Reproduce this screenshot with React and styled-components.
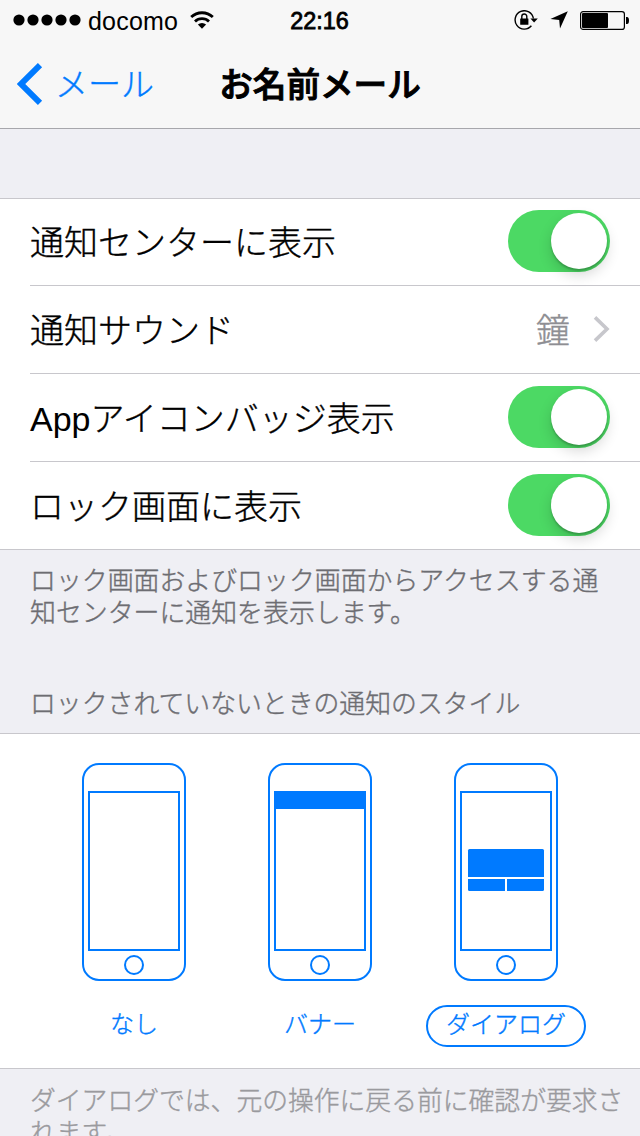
import React from "react";
import styled, { createGlobalStyle, css } from "styled-components";

const BLUE = "#007aff";
const LINE = "#c8c7cc";

const GlobalStyle = createGlobalStyle`
  * { box-sizing: border-box; }
  body { margin: 0; background: #efeff4; }
`;

const bookWeight = css`
  font-weight: 300;
  -webkit-text-stroke: 0.4px currentColor;
`;

const Screen = styled.div`
  width: 640px;
  height: 1136px;
  overflow: hidden;
  background: #efeff4;
  color: #000;
  font-family: "Liberation Sans", "Noto Sans CJK JP", sans-serif;
  font-weight: 300;
`;

const Header = styled.header`
  height: 129px;
  background: #f7f7f7;
  border-bottom: 1px solid #a7a7ac;
`;

const StatusBar = styled.div`
  display: grid;
  grid-template-columns: 1fr auto 1fr;
  align-items: center;
  height: 40px;
  padding: 0 11px 0 13px;
`;

const StatusGroup = styled.div`
  display: flex;
  align-items: center;
  justify-content: ${(p) => (p.$end ? "flex-end" : "flex-start")};
  gap: ${(p) => (p.$end ? "12px" : "0")};
  svg { display: block; flex: none; }
`;

const Carrier = styled.span`
  margin: 2px 12px 0 7px;
  font-size: 25px;
  line-height: 30px;
  letter-spacing: 0.2px;
`;

const Clock = styled.span`
  font-size: 23.4px;
  line-height: 30px;
  padding: 2px 3px 0 0;
  -webkit-text-stroke: 0.8px #000;
`;

const NavBar = styled.nav`
  display: grid;
  grid-template-columns: 1fr auto 1fr;
  align-items: center;
  height: 88px;
  padding: 0 17px;
`;

const BackButton = styled.a`
  display: flex;
  align-items: center;
  gap: 12px;
  color: ${BLUE};
  font-size: 33px;
  line-height: 44px;
  ${bookWeight}
`;

const BackLabel = styled.span`
  padding-top: 1px;
`;

const Title = styled.h1`
  margin: 0;
  padding-top: 3px;
  font-size: 33.6px;
  line-height: 44px;
  font-weight: 500;
  -webkit-text-stroke: 1px #000;
`;

const Group = styled.section`
  background: #fff;
  box-shadow: inset 0 1px ${LINE}, inset 0 -1px ${LINE};
`;

const SettingsGroup = styled(Group)`
  margin-top: 69px;
`;

const Row = styled.div`
  display: flex;
  align-items: center;
  justify-content: space-between;
  height: 88px;
  margin-left: 30px;
  padding: 0 30px 2px 0;
  box-shadow: inset 0 -1px ${LINE};
  font-size: 34px;
`;

const RowLabel = styled.span`
  padding-top: 3px;
  line-height: 50px;
  ${bookWeight}
`;

const Latin = styled.span`
  -webkit-text-stroke: 0;
`;

const RowValue = styled.span`
  display: flex;
  align-items: center;
  gap: 23px;
  color: #8e8e93;
  line-height: 50px;
  ${bookWeight}
`;

const ValueText = styled.span`
  padding-top: 3px;
`;

const SwitchTrack = styled.span`
  display: flex;
  justify-content: flex-end;
  width: 102px;
  height: 62px;
  padding: 3px;
  border-radius: 31px;
  background: #4cd964;
`;

const SwitchKnob = styled.span`
  width: 56px;
  height: 56px;
  border-radius: 50%;
  background: #fff;
  box-shadow: 0 6px 14px rgba(0, 0, 0, 0.16), 0 2px 2px rgba(0, 0, 0, 0.2);
`;

const Note = styled.p`
  margin: 0;
  padding: ${(p) => p.$pad};
  color: ${(p) => (p.$faded ? "#9a9a9e" : "#6d6d72")};
  font-size: ${(p) => p.$size || 25.9}px;
  line-height: 32px;
  ${bookWeight}
`;

const StyleGroup = styled(Group)`
  display: flex;
  justify-content: center;
  height: 336px;
  padding-top: 30px;
`;

const StyleOption = styled.div`
  display: flex;
  flex-direction: column;
  align-items: center;
  width: 186px;
  svg { display: block; }
`;

const OptionLabel = styled.span`
  width: 160px;
  height: 42px;
  margin-top: 24px;
  padding-top: 1px;
  border: 2px solid ${(p) => (p.$selected ? BLUE : "transparent")};
  border-radius: 21px;
  color: ${BLUE};
  font-size: 24px;
  line-height: 34px;
  text-align: center;
  ${bookWeight}
`;

function Switch() {
  return (
    <SwitchTrack>
      <SwitchKnob />
    </SwitchTrack>
  );
}

function SignalDots() {
  return (
    <svg width="68" height="12" viewBox="0 0 68 12">
      {[6, 20, 34, 48, 62].map((x) => (
        <circle key={x} cx={x} cy="6" r="5.6" />
      ))}
    </svg>
  );
}

function Wifi() {
  return (
    <svg width="24" height="18" viewBox="0 0 24 18">
      <g fill="none" stroke="#000" strokeWidth="2.8">
        <path d="M1.2 6.1A15.6 15.6 0 0 1 22.8 6.1" />
        <path d="M5 10.4A10 10 0 0 1 19 10.4" />
      </g>
      <path d="M12 17.8L7.9 13.5A6 6 0 0 1 16.1 13.5Z" />
    </svg>
  );
}

function RotationLock() {
  return (
    <svg width="24" height="20" viewBox="0 0 24 20">
      <path d="M17.4 15.8A9.2 9.2 0 1 1 19.4 8.5" fill="none" stroke="#000" strokeWidth="1.4" />
      <path d="M16.4 8.6H23.8L20.1 12.6Z" />
      <rect x="6.2" y="8.4" width="8.2" height="6.4" rx="0.4" />
      <path d="M7.8 9V6.6a2.5 2.6 0 0 1 5 0V9" fill="none" stroke="#000" strokeWidth="1.4" />
    </svg>
  );
}

function LocationArrow() {
  return (
    <svg width="18" height="18" viewBox="0 0 18 18">
      <path d="M17.8 0.2L10 17.6L9.2 8.9L0.4 8Z" />
    </svg>
  );
}

function Battery() {
  return (
    <svg width="49" height="19" viewBox="0 0 49 19">
      <rect x="0.6" y="0.6" width="43.8" height="17.8" rx="2.5" fill="none" stroke="#000" strokeWidth="1.2" />
      <rect x="2" y="2" width="26" height="15" rx="1" />
      <path d="M46 6h1a2 3.5 0 0 1 0 7h-1z" />
    </svg>
  );
}

function Phone({ children }) {
  return (
    <svg width="104" height="218" viewBox="0 0 104 218" fill={BLUE}>
      <g fill="none" stroke={BLUE} strokeWidth="2">
        <rect x="1" y="1" width="102" height="216" rx="16" />
        <rect x="7" y="29" width="90" height="158" />
        <circle cx="52" cy="202" r="9" />
      </g>
      {children}
    </svg>
  );
}

export default function App() {
  return (
    <Screen>
      <GlobalStyle />
      <Header>
        <StatusBar>
          <StatusGroup>
            <SignalDots />
            <Carrier>docomo</Carrier>
            <Wifi />
          </StatusGroup>
          <Clock>22:16</Clock>
          <StatusGroup $end>
            <RotationLock />
            <LocationArrow />
            <Battery />
          </StatusGroup>
        </StatusBar>
        <NavBar>
          <BackButton>
            <svg width="26" height="42" viewBox="0 0 26 42">
              <path d="M23 2.2L3.9 21L23 39.8" fill="none" stroke={BLUE} strokeWidth="6" />
            </svg>
            <BackLabel>メール</BackLabel>
          </BackButton>
          <Title>お名前メール</Title>
        </NavBar>
      </Header>

      <SettingsGroup>
        <Row>
          <RowLabel>通知センターに表示</RowLabel>
          <Switch />
        </Row>
        <Row>
          <RowLabel>通知サウンド</RowLabel>
          <RowValue>
            <ValueText>鐘</ValueText>
            <svg width="17" height="26" viewBox="0 0 17 26">
              <path d="M2 1.4L14 13L2 24.6" fill="none" stroke="#c7c7cc" strokeWidth="3.6" />
            </svg>
          </RowValue>
        </Row>
        <Row>
          <RowLabel><Latin>App</Latin>アイコンバッジ表示</RowLabel>
          <Switch />
        </Row>
        <Row>
          <RowLabel>ロック画面に表示</RowLabel>
          <Switch />
        </Row>
      </SettingsGroup>

      <Note $pad="15px 30px 0">
        ロック画面およびロック画面からアクセスする通知センターに通知を表示します。
      </Note>
      <Note $size={25.85} $pad="59px 30px 13px">ロックされていないときの通知のスタイル</Note>

      <StyleGroup>
        <StyleOption>
          <Phone />
          <OptionLabel>なし</OptionLabel>
        </StyleOption>
        <StyleOption>
          <Phone>
            <rect x="6" y="28" width="92" height="18" />
          </Phone>
          <OptionLabel>バナー</OptionLabel>
        </StyleOption>
        <StyleOption>
          <Phone>
            <path d="M14 114V87.5a1.5 1.5 0 0 1 1.5-1.5h73a1.5 1.5 0 0 1 1.5 1.5V114Z" />
            <path d="M14 116H51V128H15.5a1.5 1.5 0 0 1-1.5-1.5Z" />
            <path d="M53 116H90V126.5a1.5 1.5 0 0 1-1.5 1.5H53Z" />
          </Phone>
          <OptionLabel $selected>ダイアログ</OptionLabel>
        </StyleOption>
      </StyleGroup>

      <Note $faded $size={25.8} $pad="16px 0 0 30px">
        ダイアログでは、元の操作に戻る前に確認が要求さ<br />れます。
      </Note>
    </Screen>
  );
}
